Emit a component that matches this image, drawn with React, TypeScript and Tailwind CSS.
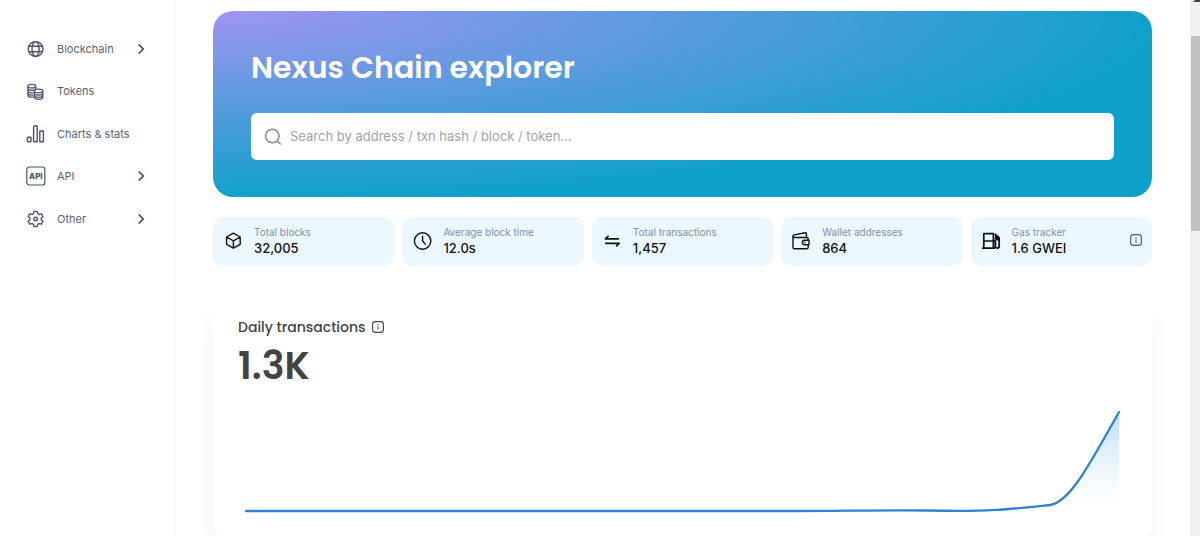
import type { ReactNode } from 'react';

function GlobeIcon() {
  return (
    <svg viewBox="0 0 20 20" className="h-5 w-5" fill="none" stroke="currentColor" strokeWidth="1.4">
      <circle cx="9.6" cy="10" r="7.4" />
      <ellipse cx="9.6" cy="10" rx="3.6" ry="7.4" />
      <path d="M3 7.2h13.2M3 12.8h13.2" />
    </svg>
  );
}

function TokensIcon() {
  return (
    <svg viewBox="0 0 20 20" className="h-5 w-5" fill="none" stroke="currentColor" strokeWidth="1.3">
      <ellipse cx="5.8" cy="4.2" rx="3.9" ry="1.8" />
      <path d="M1.9 4.2v9.2c0 1 1.7 1.8 3.9 1.8h1.8M9.7 4.2v3M1.9 6.6c0 1 1.7 1.8 3.9 1.8 1.4 0 2.4-.2 3-.6M1.9 9c0 1 1.7 1.8 3.9 1.8h1.8M1.9 11.3c0 1 1.7 1.8 3.9 1.8h1.8" />
      <ellipse cx="12.6" cy="9" rx="4.2" ry="1.8" fill="#fff" />
      <path d="M8.4 9v6.6c0 1 1.9 1.8 4.2 1.8s4.2-.8 4.2-1.8V9M8.4 11.3c0 1 1.9 1.8 4.2 1.8s4.2-.8 4.2-1.8M8.4 13.5c0 1 1.9 1.8 4.2 1.8s4.2-.8 4.2-1.8" />
    </svg>
  );
}

function ChartsIcon() {
  return (
    <svg viewBox="0 0 20 20" className="h-5 w-5" fill="none" stroke="currentColor" strokeWidth="1.4" strokeLinejoin="round">
      <rect x="1.4" y="13.2" width="3.6" height="4.6" rx="0.6" />
      <rect x="7.6" y="2" width="3.6" height="15.8" rx="0.6" />
      <rect x="13.8" y="7" width="3.6" height="10.8" rx="0.6" />
    </svg>
  );
}

function ApiIcon() {
  return (
    <svg viewBox="0 0 20 20" className="h-5 w-5" fill="none" stroke="currentColor" strokeWidth="1.2">
      <rect x="0.8" y="1" width="18" height="18" rx="2.6" />
      <text x="9.8" y="13" textAnchor="middle" fontSize="8" fontWeight="800" fill="currentColor" stroke="none">
        API
      </text>
    </svg>
  );
}

function GearIcon() {
  return (
    <svg viewBox="0 0 20 20" className="h-5 w-5" fill="none" stroke="currentColor" strokeWidth="1.4" strokeLinejoin="round">
      <path d="M8 2.4h3.2l.5 2.2 1.5.9 2.2-.7L17 7.5l-1.7 1.6v1.8l1.7 1.6-1.6 2.7-2.2-.7-1.5.9-.5 2.2H8l-.5-2.2-1.5-.9-2.2.7-1.6-2.7 1.7-1.6V9.1L2.2 7.5l1.6-2.7 2.2.7 1.5-.9z" />
      <circle cx="9.6" cy="10" r="1.8" />
    </svg>
  );
}

function ChevronIcon() {
  return (
    <svg viewBox="0 0 12 12" className="h-3 w-3" fill="none" stroke="currentColor" strokeWidth="1.7">
      <path d="M3.7 1.5 8.2 6l-4.5 4.5" />
    </svg>
  );
}

function InfoIcon() {
  return (
    <svg viewBox="0 0 12 12" className="h-3 w-3" fill="none" stroke="currentColor">
      <rect x="0.6" y="0.6" width="10.8" height="10.8" rx="2.8" strokeWidth="1.1" />
      <path d="M6 5.2v3.4M6 3.2v1.1" strokeWidth="1" />
    </svg>
  );
}

function SearchIcon() {
  return (
    <svg viewBox="0 0 18 18" className="h-[18px] w-[18px] shrink-0" fill="none" stroke="currentColor" strokeWidth="1.5">
      <circle cx="8.3" cy="8" r="6.8" />
      <path d="m13.2 12.9 3.6 3.6" />
    </svg>
  );
}

function CubeIcon() {
  return (
    <svg viewBox="0 0 20 20" className="h-5 w-5" fill="none" stroke="currentColor" strokeWidth="1.4" strokeLinejoin="round">
      <path d="m10.4 3.2 6.8 3.8v7.4l-6.8 3.8-6.8-3.8V7zM3.6 7l6.8 3.8L17.2 7M10.4 10.8v7.4" />
    </svg>
  );
}

function ClockIcon() {
  return (
    <svg viewBox="0 0 20 20" className="h-5 w-5" fill="none" stroke="currentColor" strokeWidth="1.4">
      <circle cx="10.6" cy="11" r="8.2" />
      <path d="M10.6 5.8V11l3 3.6" />
    </svg>
  );
}

function TransferIcon() {
  return (
    <svg viewBox="0 0 20 20" className="h-5 w-5" fill="none" stroke="currentColor" strokeWidth="1.8" strokeLinejoin="round" strokeLinecap="round">
      <path d="M16.4 8.8H3.4l2.6-2.4M3.8 13.4h13.4l-2.6 2.4" />
    </svg>
  );
}

function WalletIcon() {
  return (
    <svg viewBox="0 0 20 20" className="h-5 w-5" fill="none" stroke="currentColor" strokeWidth="1.4" strokeLinejoin="round">
      <path d="M17.2 10V9c0-1-.6-1.5-1.6-1.5H3.6C2.6 7.5 2 7 2 6.2v11c0 1 .7 1.6 1.6 1.6h12c1 0 1.6-.6 1.6-1.6V14.8" />
      <path d="M2 6.4c0-.9.6-1.3 1.4-1.5L14 2.7c.8-.2 1.4.3 1.4 1v3.6" />
      <path d="M18 10.2h-4.4a2.3 2.3 0 0 0 0 4.6H18z" fill="#ebf8ff" />
      <path d="M13.4 12.5h1.2" />
    </svg>
  );
}

function GasIcon() {
  return (
    <svg viewBox="0 0 20 20" className="h-5 w-5" fill="none" stroke="currentColor" strokeWidth="1.7" strokeLinejoin="round">
      <path d="M2.8 18V3.6h9.6V18M1 18.2h13M2.8 11h9.6M12.4 10.4h2v5.8a1.9 1.9 0 0 0 3.8 0V8.4L13.8 3.8" />
      <path d="M14.8 5.4v3.2l2 1.2h1.4V8z" fill="currentColor" />
    </svg>
  );
}

const navItems: { label: string; icon: ReactNode; nested?: boolean }[] = [
  { label: 'Blockchain', icon: <GlobeIcon />, nested: true },
  { label: 'Tokens', icon: <TokensIcon /> },
  { label: 'Charts & stats', icon: <ChartsIcon /> },
  { label: 'API', icon: <ApiIcon />, nested: true },
  { label: 'Other', icon: <GearIcon />, nested: true },
];

const stats: { label: string; value: string; icon: ReactNode; info?: boolean }[] = [
  { label: 'Total blocks', value: '32,005', icon: <CubeIcon /> },
  { label: 'Average block time', value: '12.0s', icon: <ClockIcon /> },
  { label: 'Total transactions', value: '1,457', icon: <TransferIcon /> },
  { label: 'Wallet addresses', value: '864', icon: <WalletIcon /> },
  { label: 'Gas tracker', value: '1.6 GWEI', icon: <GasIcon />, info: true },
];

function Sidebar() {
  return (
    <aside className="w-44 shrink-0 border-r border-gray-100 pt-7">
      <nav className="flex h-53 flex-col pr-7 pl-[26px] text-[11px] text-[#5a6270]">
        {navItems.map((item) => {
          const content = (
            <>
              <span className="text-[#4a5568]">{item.icon}</span>
              <span className="flex-1 text-left">{item.label}</span>
              {item.nested && <span className="text-[#3f4a5c]"><ChevronIcon /></span>}
            </>
          );
          return item.nested ? (
            <button key={item.label} type="button" className="flex flex-1 items-center gap-[11px]">{content}</button>
          ) : (
            <a key={item.label} href="#" className="flex flex-1 items-center gap-[11px]">{content}</a>
          );
        })}
      </nav>
    </aside>
  );
}

function Hero() {
  return (
    <section className="rounded-[20px] bg-[radial-gradient(103.03%_103.03%_at_0%_0%,#a095f0_0%,#0da1ca_100%)] px-[38px] pt-[37px] pb-[37px]">
      <h1 className="font-[Poppins,Inter,sans-serif] text-[30px] leading-10 font-semibold text-white">Nexus Chain explorer</h1>
      <label className="mt-[25px] flex h-[47px] items-center gap-2 rounded-md bg-white px-[13px] text-[#8a8a8a]">
        <SearchIcon />
        <input
          type="text"
          aria-label="Search"
          placeholder="Search by address / txn hash / block / token..."
          className="min-w-0 flex-1 text-[13px] outline-none placeholder:text-[#a3a3a3]"
        />
      </label>
    </section>
  );
}

function Stats() {
  return (
    <section className="mt-5 grid grid-cols-5 gap-2">
      {stats.map((stat) => (
        <div key={stat.label} className="flex items-center gap-[11px] rounded-[10px] bg-[#ebf8ff] pt-[7px] pr-2.5 pb-2.5 pl-2.5 text-[#101112]">
          {stat.icon}
          <div className="flex-1">
            <div className="text-[10px] leading-4 text-[#8390a5]">{stat.label}</div>
            <div className="text-[13px] leading-4 font-medium">{stat.value}</div>
          </div>
          {stat.info && (
            <button type="button" aria-label="Gas tracker info" className="text-[#4a5568]"><InfoIcon /></button>
          )}
        </div>
      ))}
    </section>
  );
}

function DailyTransactions() {
  return (
    <section className="mt-8 rounded-xl bg-white px-[25px] pt-[19px] pb-5 shadow-[0_20px_24px_rgba(0,0,0,0.06)]">
      <div className="flex items-center gap-1.5 font-[Poppins,Inter,sans-serif] text-sm leading-5 font-medium text-[#434343]">
        <h2>Daily transactions</h2>
        <button type="button" aria-label="Daily transactions info"><InfoIcon /></button>
      </div>
      <div className="mt-[5px] font-[Poppins,Inter,sans-serif] text-[38px] leading-12 font-semibold text-[#434343]">1.3K</div>
      <svg viewBox="0 0 889 112" preserveAspectRatio="none" className="mt-[15px] h-28 w-full" fill="none">
        <defs>
          <linearGradient id="area" x1="0" y1="0" x2="0" y2="1">
            <stop offset="0" stopColor="#4facde" stopOpacity="0.42" />
            <stop offset="0.95" stopColor="#bee3f8" stopOpacity="0" />
          </linearGradient>
        </defs>
        <path d="M8 106H555C605 106 640 105 690 105.5C750 107 775 104 812 100C832 97 851 60 881 7V106Z" fill="url(#area)" />
        <path
          d="M8 106H555C605 106 640 105 690 105.5C750 107 775 104 812 100C832 97 851 60 881 7"
          stroke="#3182ce"
          strokeWidth="2.3"
          strokeLinecap="round"
        />
      </svg>
    </section>
  );
}

export default function App() {
  return (
    <div className="flex h-screen overflow-hidden bg-white font-[Inter,sans-serif]">
      <Sidebar />
      <main className="min-w-0 flex-1 pt-[11px] pr-[38px] pl-[37px]">
        <Hero />
        <Stats />
        <DailyTransactions />
      </main>
      {/* scroll track */}
      <div className="w-2.5 shrink-0 bg-[#f1f1f1] pl-px">
        <div className="flex h-9 items-start justify-end">
          <svg viewBox="0 0 7 2" className="h-0.5 w-[7px]" fill="#404040">
            <path d="M2 0h5v2H0z" />
          </svg>
        </div>
        <div className="h-[195px] bg-[#c1c1c1]" />
      </div>
    </div>
  );
}
